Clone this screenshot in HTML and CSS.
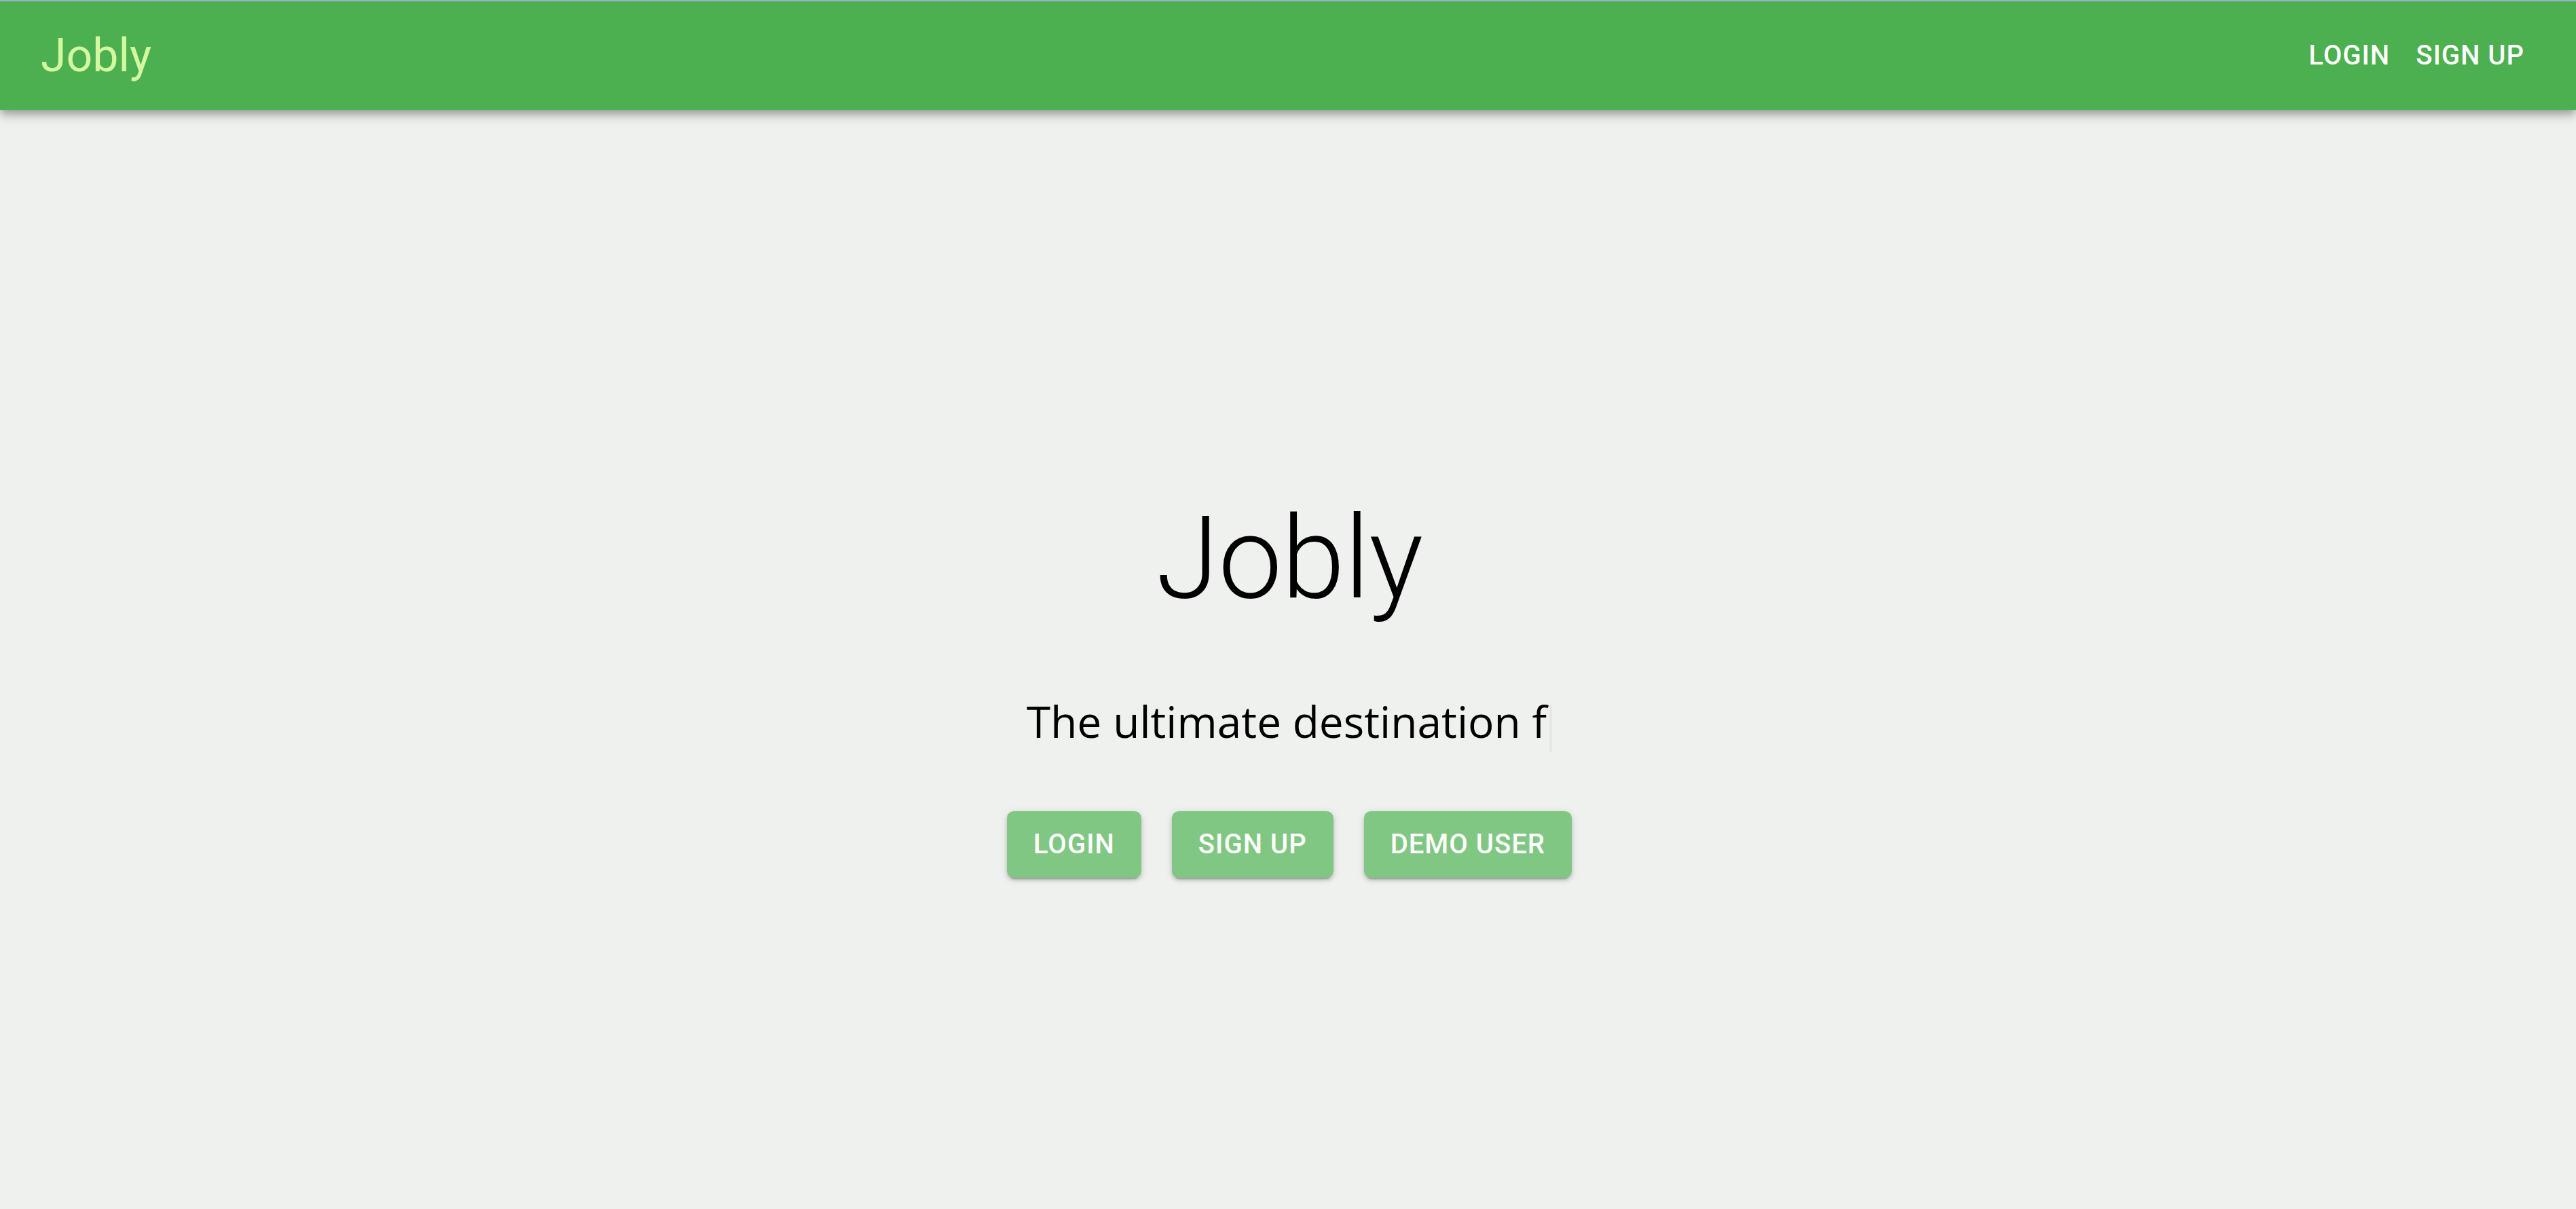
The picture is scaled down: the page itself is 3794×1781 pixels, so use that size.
FILE: index.html
```html
<!DOCTYPE html>
<html lang="en">
<head>
<meta charset="utf-8">
<meta name="viewport" content="width=device-width, initial-scale=1">
<title>Jobly</title>
<link rel="stylesheet" href="styles.css">
</head>
<body>
<header class="app-bar">
  <a class="brand" href="#">Jobly</a>
  <nav class="nav">
    <a class="nav-link" href="#login">Login</a>
    <a class="nav-link" href="#signup">Sign up</a>
  </nav>
</header>
<main class="hero">
  <h1 class="title">Jobly</h1>
  <p class="tagline"><span>The ultimate destination f</span><span class="cursor"></span></p>
  <div class="actions">
    <button class="button" type="button">Login</button>
    <button class="button" type="button">Sign up</button>
    <button class="button" type="button">Demo user</button>
  </div>
</main>
</body>
</html>
```
FILE: styles.css
```css
* {
  box-sizing: border-box;
}

body {
  display: flex;
  flex-direction: column;
  min-height: 100vh;
  margin: 0;
  background: #eff1ee;
  color: #000;
  font-family: Roboto, "Liberation Sans", sans-serif;
}

.app-bar {
  display: flex;
  align-items: center;
  justify-content: space-between;
  height: 162px;
  padding: 0 76px 0 60px;
  border-top: 2px solid #a3b0cb;
  background: #4caf50;
  box-shadow: 0 5px 10px -2px rgba(0, 0, 0, 0.2),
    0 10px 12px 0 rgba(0, 0, 0, 0.14),
    0 2px 25px 0 rgba(0, 0, 0, 0.12);
}

.brand {
  color: #d4f8a0;
  font-size: 68px;
  line-height: 80px;
  text-decoration: none;
}

.nav {
  display: flex;
  gap: 38px;
}

.nav-link,
.button {
  color: #fff;
  font-family: inherit;
  font-size: 40px;
  font-weight: 500;
  line-height: 68px;
  letter-spacing: 1px;
  text-decoration: none;
  text-transform: uppercase;
}

.hero {
  display: flex;
  flex: 1;
  flex-direction: column;
  align-items: center;
  justify-content: center;
  padding: 72px 0 0 4px;
}

.title {
  margin: 0 0 95px;
  font-size: 168px;
  font-weight: 300;
  line-height: 200px;
  letter-spacing: -1px;
}

.tagline {
  display: flex;
  align-items: flex-end;
  gap: 4px;
  margin: 0 0 87px;
  font-family: "Open Sans", "Noto Sans", sans-serif;
  font-size: 64px;
  line-height: 90px;
}

.cursor {
  width: 4px;
  height: 69px;
  background: #e6e7e6;
}

.actions {
  display: flex;
  gap: 45px;
}

.button {
  padding: 15px 39px;
  border: 0;
  border-radius: 10px;
  background: #81c784;
  box-shadow: 0 7px 2px -5px rgba(0, 0, 0, 0.2),
    0 4px 5px 0 rgba(0, 0, 0, 0.14),
    0 2px 12px 0 rgba(0, 0, 0, 0.12);
}
```
